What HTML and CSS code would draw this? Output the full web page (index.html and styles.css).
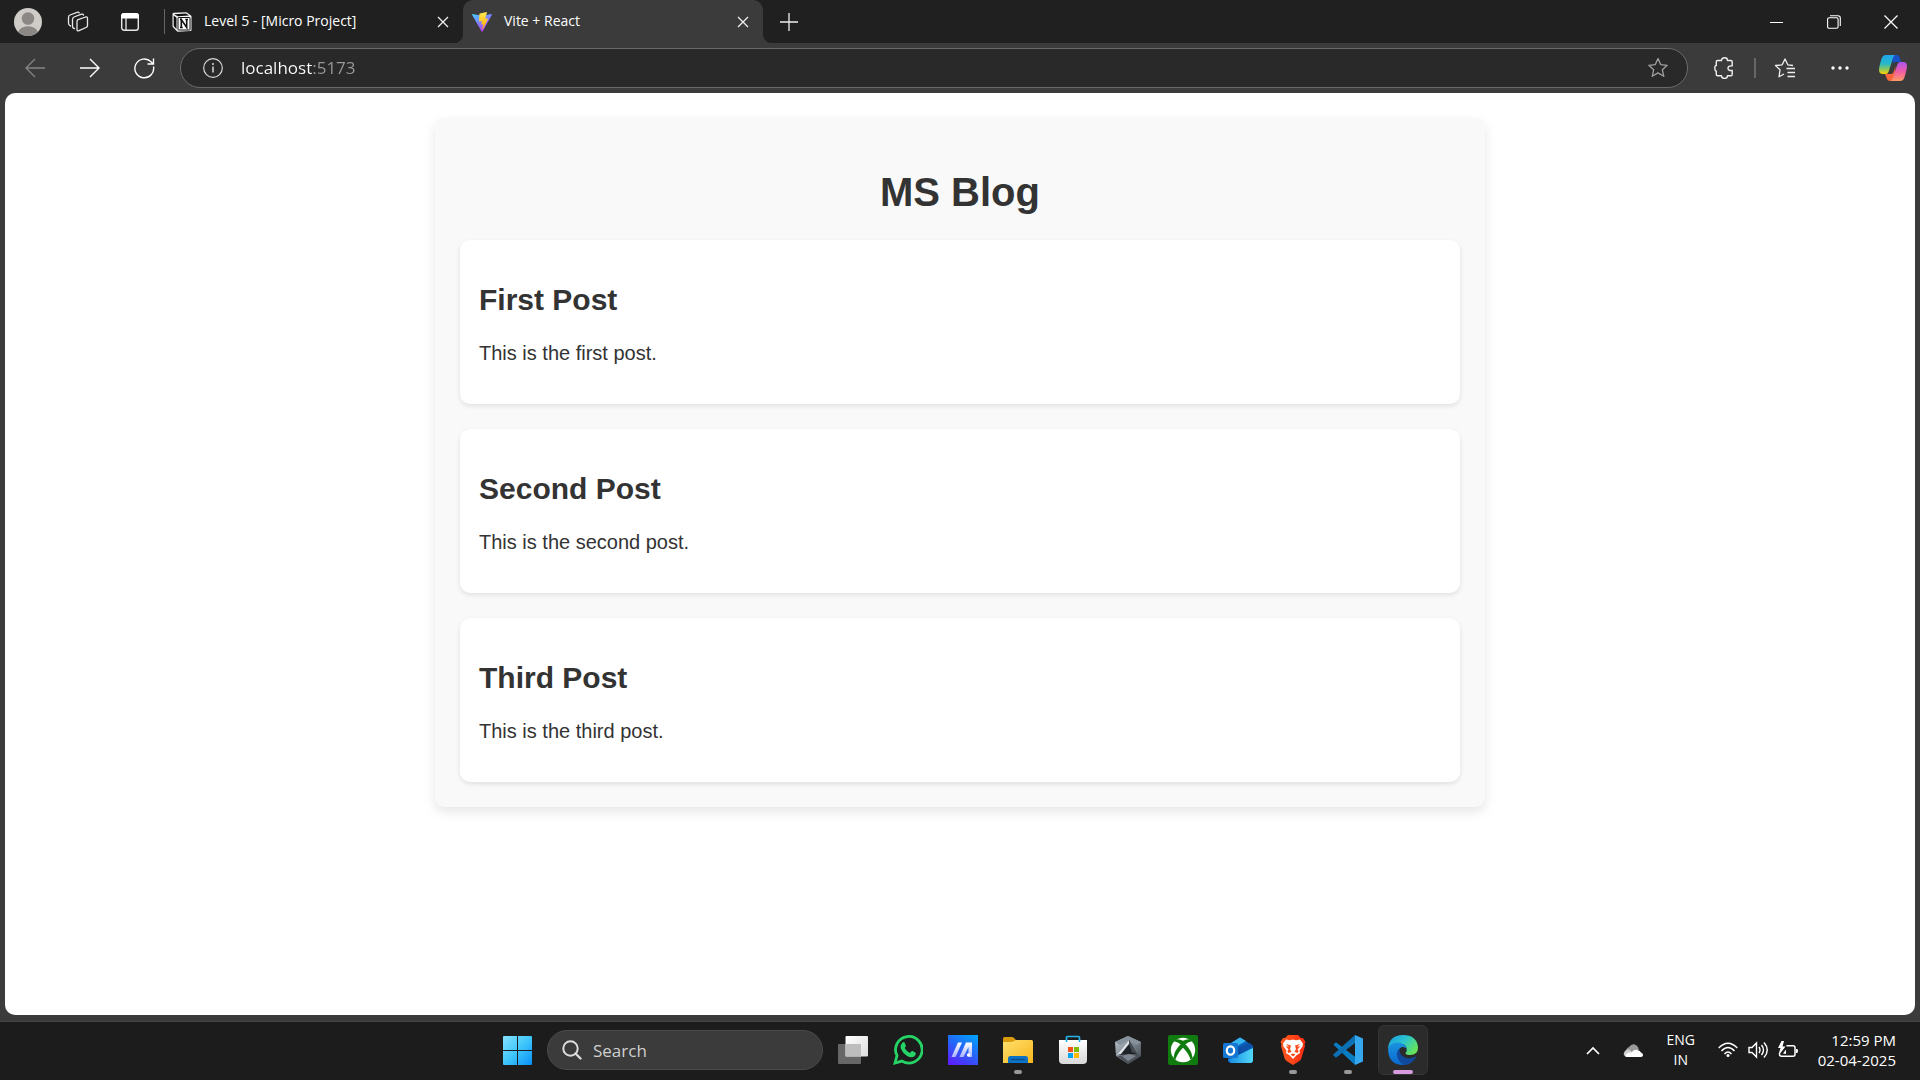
FILE: index.html
```html
<!DOCTYPE html>
<html lang="en">
<head>
<meta charset="utf-8">
<title>Vite + React</title>
<link rel="stylesheet" href="styles.css">
</head>
<body>
<header class="tabbar">
  <button class="tool avatar-btn" aria-label="Profile">
    <svg width="28" height="28" viewBox="0 0 28 28"><defs><clipPath id="av"><circle cx="14" cy="14" r="14"/></clipPath></defs><g clip-path="url(#av)"><rect width="28" height="28" fill="#cfccc8"/><circle cx="14" cy="10.500" r="6.300" fill="#8b8784"/><ellipse cx="14" cy="25" rx="10" ry="6.800" fill="#8b8784"/></g></svg>
  </button>
  <button class="tool" aria-label="Workspaces">
    <svg width="22" height="22" viewBox="0 0 22 22" fill="none" stroke="#e8e8e8" stroke-width="1.300" stroke-linejoin="round" stroke-linecap="round"><path d="M10.500 8.800 18.500 6q2-.5 2 1.300v7.200q0 1.500-1.500 2l-7 3.200q-2 .8-2-1.300v-7.200q0-1.700.5-2.400z"/><path d="M7.500 17.500Q5.500 17.500 5.500 15V8.500Q5.500 6.700 7 6l7.500-2.800q1.700-.4 2 .8"/><path d="M3.500 15Q1.500 14.500 1.500 12V6.500Q1.500 4.500 3 4l7-2.700q1.700-.4 2.200.6"/></svg>
  </button>
  <button class="tool" aria-label="Tab actions">
    <svg width="18" height="18" viewBox="0 0 18 18"><rect x=".7" y=".7" width="16.600" height="16.600" rx="2.500" fill="none" stroke="#e8e8e8" stroke-width="1.400"/><path d="M0 3Q0 0 3 0h12q3 0 3 3v2.500H0z" fill="#fff"/><path d="M5 5v12" stroke="#e8e8e8" stroke-width="1.300"/></svg>
  </button>
  <nav class="tabs" aria-label="Tabs">
    <div class="tab">
      <svg width="20" height="20" viewBox="0 0 20 20"><path d="M2 .7 14.500.3 19 3.500q.5.400.5 1V18q0 1-1 1.100L6 19.700q-.8 0-1.300-.6L1 15.300q-.5-.6-.5-1.300V2Q.5.800 2 .7z" fill="#f4f4f4"/><path d="M2 2.200 14 1.500l3 2-11.200.7z" fill="#111"/><path d="M1.700 3.500 4.500 5.800V17L1.700 14z" fill="#111"/><rect x="6" y="5.500" width="12" height="12.500" rx=".5" fill="#fff" stroke="#111" stroke-width="1"/><path d="M9.300 15.500v-8l5.400 8v-8M8 7.500h2M13.300 7.500H16M8 15.500h2.700" fill="none" stroke="#111" stroke-width="1.600"/></svg>
      <span class="tab-title">Level 5 - [Micro Project]</span>
      <button class="tab-close" aria-label="Close tab"><svg width="12" height="12" viewBox="0 0 12 12"><path d="m1 1 10 10M11 1 1 11" stroke="#f0f0f0" stroke-width="1.300"/></svg></button>
    </div>
    <div class="tab active">
      <svg width="20" height="20" viewBox="0 0 20 20"><defs><linearGradient id="v1" x1="0" y1="0" x2=".6" y2="1"><stop offset="0" stop-color="#41d1ff"/><stop offset="1" stop-color="#bd34fe"/></linearGradient><linearGradient id="v2" x1="0" y1="0" x2="0" y2="1"><stop offset="0" stop-color="#ffea50"/><stop offset="1" stop-color="#ffa800"/></linearGradient></defs><path d="M.6 2 10 3.700 19.400 2q.8 0 .4.900L10.600 19.400q-.5.700-1 0L.2 2.900Q-.1 2.100.6 2z" fill="url(#v1)"/><path d="m14.500.1-6.700 1.300q-.4.100-.4.500L7 9q0 .500.500.4l1.900-.4q.5 0 .4.500l-.5 2.700q-.1.500.4.400l1.100-.3q.5 0 .4.500l-.9 4.200q0 .7.500.2L16 6.900q.2-.6-.4-.5l-1.900.3q-.5 0-.4-.5l1.600-5.500q0-.6-.4-.6z" fill="url(#v2)"/></svg>
      <span class="tab-title">Vite + React</span>
      <button class="tab-close" aria-label="Close tab"><svg width="12" height="12" viewBox="0 0 12 12"><path d="m1 1 10 10M11 1 1 11" stroke="#f0f0f0" stroke-width="1.300"/></svg></button>
    </div>
  </nav>
  <button class="tool" aria-label="New tab"><svg width="18" height="18" viewBox="0 0 18 18"><path d="M9 0v18M0 9h18" stroke="#f0f0f0" stroke-width="1.300"/></svg></button>
  <div class="window-controls">
    <button aria-label="Minimize"><svg width="14" height="14" viewBox="0 0 14 14"><path d="M0 7.500h13" stroke="#fff"/></svg></button>
    <button aria-label="Restore"><svg width="14" height="14" viewBox="0 0 14 14" fill="none" stroke="#fff" stroke-width="1.100"><rect x=".6" y="2.800" width="10.500" height="10.500" rx="1.500"/><path d="M3 .7h8q2.300 0 2.300 2.300v8"/></svg></button>
    <button aria-label="Close"><svg width="14" height="14" viewBox="0 0 14 14"><path d="m.5.5 13 13M13.500.5l-13 13" stroke="#fff" stroke-width="1.200"/></svg></button>
  </div>
</header>
<div class="toolbar">
  <button class="nav-btn" aria-label="Back"><svg width="20" height="20" viewBox="0 0 20 20" fill="none" stroke="#858585" stroke-width="1.300"><path d="M20 10H1M10 1 1 10l9 9"/></svg></button>
  <button class="nav-btn" aria-label="Forward"><svg width="20" height="20" viewBox="0 0 20 20" fill="none" stroke="#fff" stroke-width="1.400"><path d="M0 10h19M10 1l9 9-9 9"/></svg></button>
  <button class="nav-btn" aria-label="Refresh"><svg width="21" height="21" viewBox="0 0 21 21" fill="none" stroke="#fff" stroke-width="1.400"><path d="M19.500 8.500A9.400 9.400 0 1 1 17 3.800l2 2M19.500.5v5.500h-6"/></svg></button>
  <div class="address">
    <svg width="20" height="20" viewBox="0 0 20 20"><circle cx="10" cy="10" r="9.300" fill="none" stroke="#d8d8d8" stroke-width="1.200"/><path d="M10 8.500v6" stroke="#d8d8d8" stroke-width="1.500"/><circle cx="10" cy="6" r="1" fill="#d8d8d8"/></svg>
    <input class="url" type="text" aria-label="Address" value="localhost:5173">
    <button class="star" aria-label="Add to favorites"><svg width="22" height="22" viewBox="0 0 22 22"><path d="m11 1.600 2.700 6 6.500.7-4.900 4.400 1.500 6.600-5.800-3.400-5.800 3.400 1.500-6.600-4.900-4.400 6.500-.7z" fill="none" stroke="#a0a0a0" stroke-width="1.300" stroke-linejoin="round"/></svg></button>
  </div>
  <button class="ext-btn" aria-label="Extensions"><svg width="20" height="22" viewBox="0 0 20 22"><path d="M3.500 3.500h4Q7.500.8 10.500.8t3 2.700H17q1.200 0 1.200 1.200v4.200q-4.200-.4-4.200 2.300t4.200 2.300v4q0 1.300-1.200 1.300h-3.500q0 2.700-3 2.700t-3-2.700h-4q-1.200 0-1.200-1.300v-3.300Q.8 13.800.8 11.200t1.500-2.800V4.700q0-1.200 1.200-1.200z" fill="none" stroke="#f0f0f0" stroke-width="1.400" stroke-linejoin="round"/></svg></button>
  <span class="divider"></span>
  <button class="fav-btn" aria-label="Favorites"><svg width="22" height="20" viewBox="0 0 22 20" fill="none" stroke="#f0f0f0" stroke-width="1.300" stroke-linejoin="round"><path d="M21 10.500h-8.500M21 14.500h-7.500M21 18.500h-7.500M19 7.500l-5.200-.7L11 1 8.200 6.800 1.500 7.500 6 11.800 5 18.800l5-2.800"/></svg></button>
  <button class="nav-btn" aria-label="Settings and more"><svg width="18" height="4" viewBox="0 0 18 4" fill="#fff"><circle cx="2" cy="2" r="1.700"/><circle cx="9" cy="2" r="1.700"/><circle cx="16" cy="2" r="1.700"/></svg></button>
  <button class="copilot" aria-label="Copilot"><svg width="28" height="26" viewBox="0 0 28 26"><defs><linearGradient id="c1" x1="0" y1="0" x2="0" y2="1"><stop offset="0" stop-color="#20a5ee"/><stop offset=".45" stop-color="#25b9ca"/><stop offset=".75" stop-color="#8ac65a"/><stop offset="1" stop-color="#ffd500"/></linearGradient><linearGradient id="c2" x1="0" y1="0" x2="0" y2="1"><stop offset="0" stop-color="#ae55ee"/><stop offset=".5" stop-color="#ef5ca6"/><stop offset="1" stop-color="#ff9a63"/></linearGradient></defs><path d="M13 0h5q2 0 2.600 2l1.400 5h-5.500q-2 0-2.600 2z" fill="#1851c5"/><path d="M15 26h-4q-2.500 0-3-2l-2-5h6q2 0 2.600-2l2-6z" fill="#f8663d"/><path d="M7 0h10q-2 0-2.700 2l-4.600 14.500Q9 19 6.500 19H4q-4 0-4-4 0-3 2.300-10.500Q3.500 0 7 0z" fill="url(#c1)"/><path d="M21 26H11q2 0 2.700-2l4.600-14.500Q19 7 21.500 7H24q4 0 4 4 0 3-2.300 10.500Q24.500 26 21 26z" fill="url(#c2)"/></svg></button>
</div>
<main class="viewport">
  <section class="blog">
    <h1>MS Blog</h1>
    <div class="posts">
      <article class="post"><h2>First Post</h2><p>This is the first post.</p></article>
      <article class="post"><h2>Second Post</h2><p>This is the second post.</p></article>
      <article class="post"><h2>Third Post</h2><p>This is the third post.</p></article>
    </div>
  </section>
</main>
<footer class="taskbar">
  <div class="apps">
    <button class="app" aria-label="Start"><svg width="29" height="29" viewBox="0 0 29 29"><defs><linearGradient id="w" x1="0" y1="0" x2="1" y2="1"><stop offset="0" stop-color="#86e2fb"/><stop offset=".5" stop-color="#3fc6fb"/><stop offset="1" stop-color="#0890f5"/></linearGradient></defs><path d="M1 0h13v14H0V1q0-1 1-1zM15 0h13q1 0 1 1v13H15zM0 15h14v14H1q-1 0-1-1zM15 15h14v13q0 1-1 1H15z" fill="url(#w)"/></svg></button>
    <label class="search"><svg width="20" height="20" viewBox="0 0 20 20" fill="none" stroke="#dcdcdc" stroke-width="2"><circle cx="8.500" cy="8.500" r="7.200"/><path d="m13.500 13.500 5 5" stroke-width="2.400" stroke-linecap="round"/></svg><input type="search" placeholder="Search" aria-label="Search"></label>
    <button class="app" aria-label="Task view"><svg width="30" height="28" viewBox="0 0 30 28"><defs><linearGradient id="tv" x1="0" y1="0" x2="1" y2="1"><stop offset="0" stop-color="#fff"/><stop offset="1" stop-color="#ddd"/></linearGradient></defs><rect y="8" width="23" height="20" rx="1" fill="#676767"/><rect x="7.500" width="22.500" height="20.500" rx="1" fill="url(#tv)"/><path d="M7.500 8H23v12.500H7.500z" fill="#bdbdbd"/></svg></button>
    <button class="app" aria-label="WhatsApp"><svg width="30" height="30" viewBox="0 0 30 30"><path d="M2 28 4 20.700A13.300 13.300 0 1 1 9 26.100z" fill="none" stroke="#25d366" stroke-width="2.800"/><path d="M9.500 7.500q.7-.7 1.700-.2.400.2.600.8l1 2.400q.3.600-.2 1.200l-1 1.300q2 3.600 5.400 5l1.500-1.700q.5-.5 1.100-.2l2.600 1.300q.7.300.6 1-.3 3.600-4.600 3.800-4 0-8.300-5-4.500-5.600-.4-9.700z" fill="#25d366"/></svg></button>
    <button class="app" aria-label="MyASUS"><svg width="30" height="30" viewBox="0 0 30 30"><defs><linearGradient id="my" x1=".2" y1="1" x2=".8" y2="0"><stop offset="0" stop-color="#5b20fa"/><stop offset=".5" stop-color="#2861f8"/><stop offset="1" stop-color="#049df9"/></linearGradient><linearGradient id="my2" x1="0" y1="0" x2="0" y2="1"><stop offset="0" stop-color="#fff"/><stop offset="1" stop-color="#a7b4ff"/></linearGradient></defs><path d="M0 0h30v30H0z" fill="url(#my)"/><path d="M3.500 22 10 7.500h4L7.500 22z" fill="url(#my2)"/><path d="M11.500 22 18 7.500h6V22h-3.500V12L15.500 22z" fill="url(#my2)"/><circle cx="20.500" cy="20" r="1.700" fill="#fff"/></svg></button>
    <button class="app running" aria-label="File Explorer"><svg width="30" height="28" viewBox="0 0 30 28"><defs><linearGradient id="fe" x1="0" y1="0" x2="1" y2="1"><stop offset="0" stop-color="#ffe06d"/><stop offset="1" stop-color="#f8b51c"/></linearGradient></defs><path d="M1.500 1H9q1 0 2 1l2 2h10v8H0V2.500Q0 1 1.500 1z" fill="#d99a0b"/><path d="M0 6h9l4-2h15.500Q30 4 30 5.500V27H0z" fill="url(#fe)"/><path d="M5 27v-4.500Q5 20 7.500 20h15q2.500 0 2.500 2.500V27z" fill="#0e72c4"/><path d="M8 23.500h14" stroke="#084b88" stroke-width="1.200"/></svg></button>
    <button class="app" aria-label="Microsoft Store"><svg width="30" height="30" viewBox="0 0 30 30"><defs><linearGradient id="ms" x1="0" y1="0" x2="0" y2="1"><stop offset="0" stop-color="#fff"/><stop offset="1" stop-color="#d8d8d8"/></linearGradient></defs><path d="M1 5h28v20q0 4-4 4H5q-4 0-4-4z" fill="url(#ms)"/><path d="M8.500 7V2.500q0-1 1-1h11q1 0 1 1V7" fill="none" stroke="#25b4e8" stroke-width="1.700"/><path d="M10 12h5v5h-5z" fill="#f1511b"/><path d="M16 12h5v5h-5z" fill="#80bb01"/><path d="M10 18h5v5h-5z" fill="#05a6f0"/><path d="M16 18h5v5h-5z" fill="#fb0"/></svg></button>
    <button class="app" aria-label="Armoury Crate"><svg width="28" height="28" viewBox="0 0 28 28"><defs><linearGradient id="ac" x1="0" y1="0" x2="1" y2="1"><stop offset="0" stop-color="#c3ccd4"/><stop offset=".5" stop-color="#7b858f"/><stop offset="1" stop-color="#3c4148"/></linearGradient></defs><path d="M14 0 27 6v14l-13 8-12-8L1 6z" fill="url(#ac)"/><path d="m14 0 13 6-4 3-8-5-9 5-5-3z" fill="#87919b"/><path d="M15 4 23 18 4 19z" fill="#1f2226"/><path d="M15 4 3 19l4-1 8-10z" fill="#dce0e4"/><path d="m15 4 8 14-5-2-3-8z" fill="#454b52"/><path d="m3 20 20-2 4 2-13 8z" fill="#4b5158"/><path d="m8 20 7-2 7 2-8 5z" fill="#7d868f"/></svg></button>
    <button class="app" aria-label="Xbox"><svg width="30" height="30" viewBox="0 0 30 30"><rect width="30" height="30" rx="2" fill="#107c10"/><circle cx="15" cy="15" r="12.200" fill="#fff"/><path d="M7.500 4.500Q11 3.600 15 5.800q4-2.200 7.500-1.300l1.500 2q-2.500-.5-6.600 2.700Q24 15.500 24.500 23l-2 1.500Q20.500 18 15 12.800 9.500 18 7.500 24.500l-2-1.500Q6 15.500 12.600 9.200 8.500 6 6 6.500z" fill="#107c10"/></svg></button>
    <button class="app" aria-label="Outlook"><svg width="30" height="27" viewBox="0 0 30 27"><defs><linearGradient id="ol" x1="0" y1="0" x2="1" y2="0"><stop offset="0" stop-color="#168ae0"/><stop offset="1" stop-color="#52d9fb"/></linearGradient></defs><path d="M5 8 16 1q1-.8 2 0l12 8v14q0 3-3 3H8q-3 0-3-3z" fill="#0b62bd"/><path d="M5 8 16 1q1-.8 2 0l5 3L5 14z" fill="#35b5ef"/><path d="m14 11 13-5 3 3L15 20z" fill="#0c50a8"/><path d="M30 11v12q0 3-3 3H8l-3-3z" fill="url(#ol)"/><rect y="6" width="15" height="15" rx="1.500" fill="#1477d3"/><ellipse cx="7.500" cy="13.500" rx="3.700" ry="4.200" fill="none" stroke="#fff" stroke-width="2.200"/></svg></button>
    <button class="app running" aria-label="Brave"><svg width="26" height="30" viewBox="0 0 26 30"><defs><linearGradient id="br"><stop offset="0" stop-color="#ff5a1f"/><stop offset="1" stop-color="#fb2c10"/></linearGradient></defs><path d="M8 0h10l3 3h2l2.500 4-1 2.500.5 1.500-3.500 12q-.5 2-2.500 3.300L13 30l-6-3.700Q5 25 4.500 23L1 11l.5-1.500-1-2.500L3 3h2z" fill="url(#br)"/><path d="m6 4.500 4 .8 3-.7 3 .7 4-.8 3 4-.5 3-3 4 .5 2.500-3.500 2.200L13 24l-3.500-3.800L6 18l.5-2.500-3-4L3 8.500z" fill="#fff"/><path d="m6 9 5 1.500-1 3.500 1.500 3-3.500 1-.5-2 1-1.500-3-3.500 3.500 1zM20 9l-5 1.500 1 3.500-1.500 3 3.500 1 .5-2-1-1.500 3-3.500-3.500 1zM10.500 19.500l2.500-1 2.500 1-2.500 2z" fill="#fb4a1c"/></svg></button>
    <button class="app running" aria-label="Visual Studio Code"><svg width="30" height="30" viewBox="0 0 30 30"><path d="m1 9 2-1.700 19 14.500V30L.7 10z" fill="#087dc4"/><path d="m1 21-1-1.300L22 0v8L3 22.800z" fill="#0d70b5"/><path d="m22 0 8 3.500v23L22 30z" fill="#35a7ee"/></svg></button>
    <button class="app running current" aria-label="Microsoft Edge"><svg width="30" height="30" viewBox="0 0 30 30"><defs><linearGradient id="e1" x1="0" y1="0" x2="1" y2=".6"><stop offset="0" stop-color="#1a9be0"/><stop offset=".5" stop-color="#29c3d2"/><stop offset="1" stop-color="#66e35b"/></linearGradient><linearGradient id="e2" x1="0" y1="0" x2="0" y2="1"><stop offset="0" stop-color="#1b93df"/><stop offset="1" stop-color="#0868cf"/></linearGradient></defs><path d="M0 14Q1 0 15 0q14 0 15 12.500 0 7.500-8 7.500-4.500 0-4.500-2 2-2 1-5Q17 8 10 9 3 9 0 14z" fill="url(#e1)"/><path d="M0 15Q1 8 9 7.500q9 0 10 7.500-1-3-4-3-4 0-4.500 4.500Q10 22 17 30h-2Q1 30 0 15z" fill="url(#e2)"/><path d="M11.500 13.500Q8 16 9 21q2 7.500 8 9 7-.8 11-7.500.5-1.300-1-.7-6 3-11.500 0-4.500-3-4-8.300z" fill="#114a9c"/></svg></button>
  </div>
  <div class="tray">
    <button aria-label="Show hidden icons"><svg width="14" height="9" viewBox="0 0 14 9"><path d="m1 8 6-6 6 6" fill="none" stroke="#fff" stroke-width="1.700"/></svg></button>
    <button class="cloud" aria-label="OneDrive"><svg width="20" height="13" viewBox="0 0 20 13"><path d="M3 8q0-4 3-5 3-4 7-2 3 2 3 5z" fill="#999"/><path d="M1 9q1-4 5-3.500L15 12H3Q0 12 1 9z" fill="#cfcfcf"/><path d="M2 12q2-4 6-3.500Q11 5 14 6q3 0 4 2.500 2 .5 2 2.500t-3 2H4q-2 0-2-1z" fill="#fff"/></svg></button>
    <button class="lang"><span>ENG</span><span>IN</span></button>
    <button class="status" aria-label="Network, volume and battery">
      <svg width="20" height="16" viewBox="0 0 20 16" fill="none" stroke="#fff" stroke-width="1.500"><path d="M.7 6Q10-3.500 19.300 6M3.500 9Q10 2 16.500 9M6.500 12Q10 8 13.500 12"/><circle cx="10" cy="13.500" r="1.500" fill="#fff" stroke="none"/></svg>
      <svg width="20" height="18" viewBox="0 0 20 18" fill="none" stroke="#fff" stroke-width="1.400"><path d="M1 6.500h3L8.500 2v14L4 11.500H1zM11 6q2 3 0 6M13.500 4q4 5 0 10M16 1.500q6.500 7.500 0 15"/></svg>
      <svg width="20" height="18" viewBox="0 0 20 18"><path d="M8.500 4.700h6.500q2 0 2 2v6.500q0 2-2 2H3.500q-2 0-2-2V12" fill="none" stroke="#fff" stroke-width="1.500"/><path d="M18 8h1q1 0 1 2t-1 2h-1zM3.500 0 0 7h2.500L1 12h1.500L7.500 5.500h-3L6 0zM5 12.500l3-4V13z" fill="#fff"/></svg>
    </button>
    <button class="clock"><span>12:59 PM</span><span>02-04-2025</span></button>
  </div>
</footer>
</body>
</html>
```
FILE: styles.css
```css
* { box-sizing: border-box; }

body {
  margin: 0;
  min-height: 100vh;
  display: flex;
  flex-direction: column;
  background: #3b3b3b;
  color: #fff;
  font-family: "Segoe UI", "Open Sans", "Noto Sans", sans-serif;
  font-size: 14px;
}

button {
  display: flex;
  align-items: center;
  justify-content: center;
  flex-shrink: 0;
  padding: 0;
  border: 0;
  background: none;
  color: inherit;
  font: inherit;
}

svg { display: block; flex-shrink: 0; }

input {
  min-width: 0;
  flex: 1;
  padding: 0;
  border: 0;
  outline: 0;
  background: none;
  color: inherit;
  font: inherit;
}

/* Tab strip */
.tabbar {
  display: flex;
  height: 43px;
  padding-right: 1px;
  background: #202020;
}
.tool { width: 52px; }
.avatar-btn { width: 56px; margin-right: -4px; }
.tabs { display: flex; align-items: center; margin-left: 7px; }
.tab {
  position: relative;
  display: flex;
  align-items: center;
  width: 300px;
  height: 43px;
  padding: 0 14px 0 9px;
}
.tab:first-child::before {
  content: "";
  position: absolute;
  left: 1px;
  top: 9px;
  width: 1px;
  height: 25px;
  background: #666;
}
.tab-title {
  flex: 1;
  padding: 0 0 2px 12px;
  line-height: 20px;
  white-space: nowrap;
}
.tab-close { width: 12px; height: 43px; }
.tab.active { background: #3b3b3b; border-radius: 10px 10px 0 0; }
.tab.active::before,
.tab.active::after {
  content: "";
  position: absolute;
  bottom: 0;
  width: 10px;
  height: 10px;
}
.tab.active::before {
  left: -10px;
  background: radial-gradient(circle at 0 0, #202020 10px, #3b3b3b 11px);
}
.tab.active::after {
  right: -10px;
  background: radial-gradient(circle at 100% 0, #202020 10px, #3b3b3b 11px);
}
.window-controls { display: flex; margin-left: auto; }
.window-controls button { width: 57px; }

/* Address row */
.toolbar {
  display: flex;
  align-items: center;
  height: 50px;
  padding: 0 13px 0 7px;
}
.nav-btn { width: 55px; height: 40px; }
.address {
  flex: 1;
  display: flex;
  align-items: center;
  height: 40px;
  margin: 0 10px 0 8px;
  padding: 0 18px 0 22px;
  border: 1px solid #6b6b6b;
  border-radius: 20px;
  background: #292929;
}
.url {
  height: 28px;
  margin-left: 18px;
  padding-bottom: 2px;
  font-size: 17px;
  color: transparent;
  background: linear-gradient(90deg, #fff 72px, #9a9a9a 72px);
  background-clip: text;
  -webkit-background-clip: text;
}
.ext-btn { width: 52px; height: 40px; }
.divider { width: 2px; height: 20px; margin: 0 2px 0 4px; background: #666; }
.fav-btn { width: 54px; height: 40px; }
.copilot { width: 28px; height: 40px; margin-left: 12px; }

/* Page area */
.viewport {
  flex: 1;
  margin: 0 5px 6px;
  padding: 25px;
  border-radius: 10px;
  background: #fff;
  color: #333;
  font-family: Arial, "Liberation Sans", sans-serif;
}
.blog {
  max-width: 1050px;
  margin: 0 auto;
  padding: 25px;
  border-radius: 10px;
  background: #f9f9f9;
  box-shadow: 0 5px 12px rgba(0, 0, 0, 0.1);
}
h1 {
  margin: 27px 0 25px;
  font-size: 40px;
  line-height: 45px;
  text-align: center;
}
.posts { display: flex; flex-direction: column; gap: 25px; }
.post {
  padding: 19px;
  border-radius: 10px;
  background: #fff;
  box-shadow: 0 2px 5px rgba(0, 0, 0, 0.1);
}
h2 { margin: 24px 0 25px; font-size: 30px; line-height: 34px; }
p { margin: 0 0 20px; font-size: 20px; line-height: 23px; }

/* Taskbar */
.taskbar {
  display: grid;
  grid-template-columns: 1fr auto 1fr;
  height: 59px;
  padding-bottom: 2px;
  border-top: 1px solid #444;
  background: #1c1c1c;
}
.apps { grid-column: 2; display: flex; align-items: center; gap: 5px; }
.app {
  position: relative;
  width: 50px;
  height: 50px;
  border: 1px solid transparent;
  border-radius: 6px;
}
.running::after {
  content: "";
  position: absolute;
  bottom: 0;
  width: 8px;
  height: 4px;
  border-radius: 2px;
  background: #999;
}
.current { background: #2b2b2b; border-color: #353535; }
.current::after { width: 20px; background: #d99be0; }
.search {
  display: flex;
  align-items: center;
  gap: 11px;
  width: 276px;
  height: 40px;
  padding: 0 14px;
  border: 1px solid #4b4b4b;
  border-radius: 20px;
  background: #3b3b3b;
  font-size: 17px;
}
.search input::placeholder { color: #cfcfcf; opacity: 1; }
.tray {
  display: flex;
  align-items: center;
  justify-content: flex-end;
  padding-right: 24px;
}
.tray button { height: 50px; }
.cloud { margin: 0 14px 0 23px; }
.lang, .clock { flex-direction: column; line-height: 20px; }
.lang { width: 48px; }
.status { gap: 10px; margin: 0 20px 0 13px; }
.clock { align-items: flex-end; font-size: 15px; }
```
